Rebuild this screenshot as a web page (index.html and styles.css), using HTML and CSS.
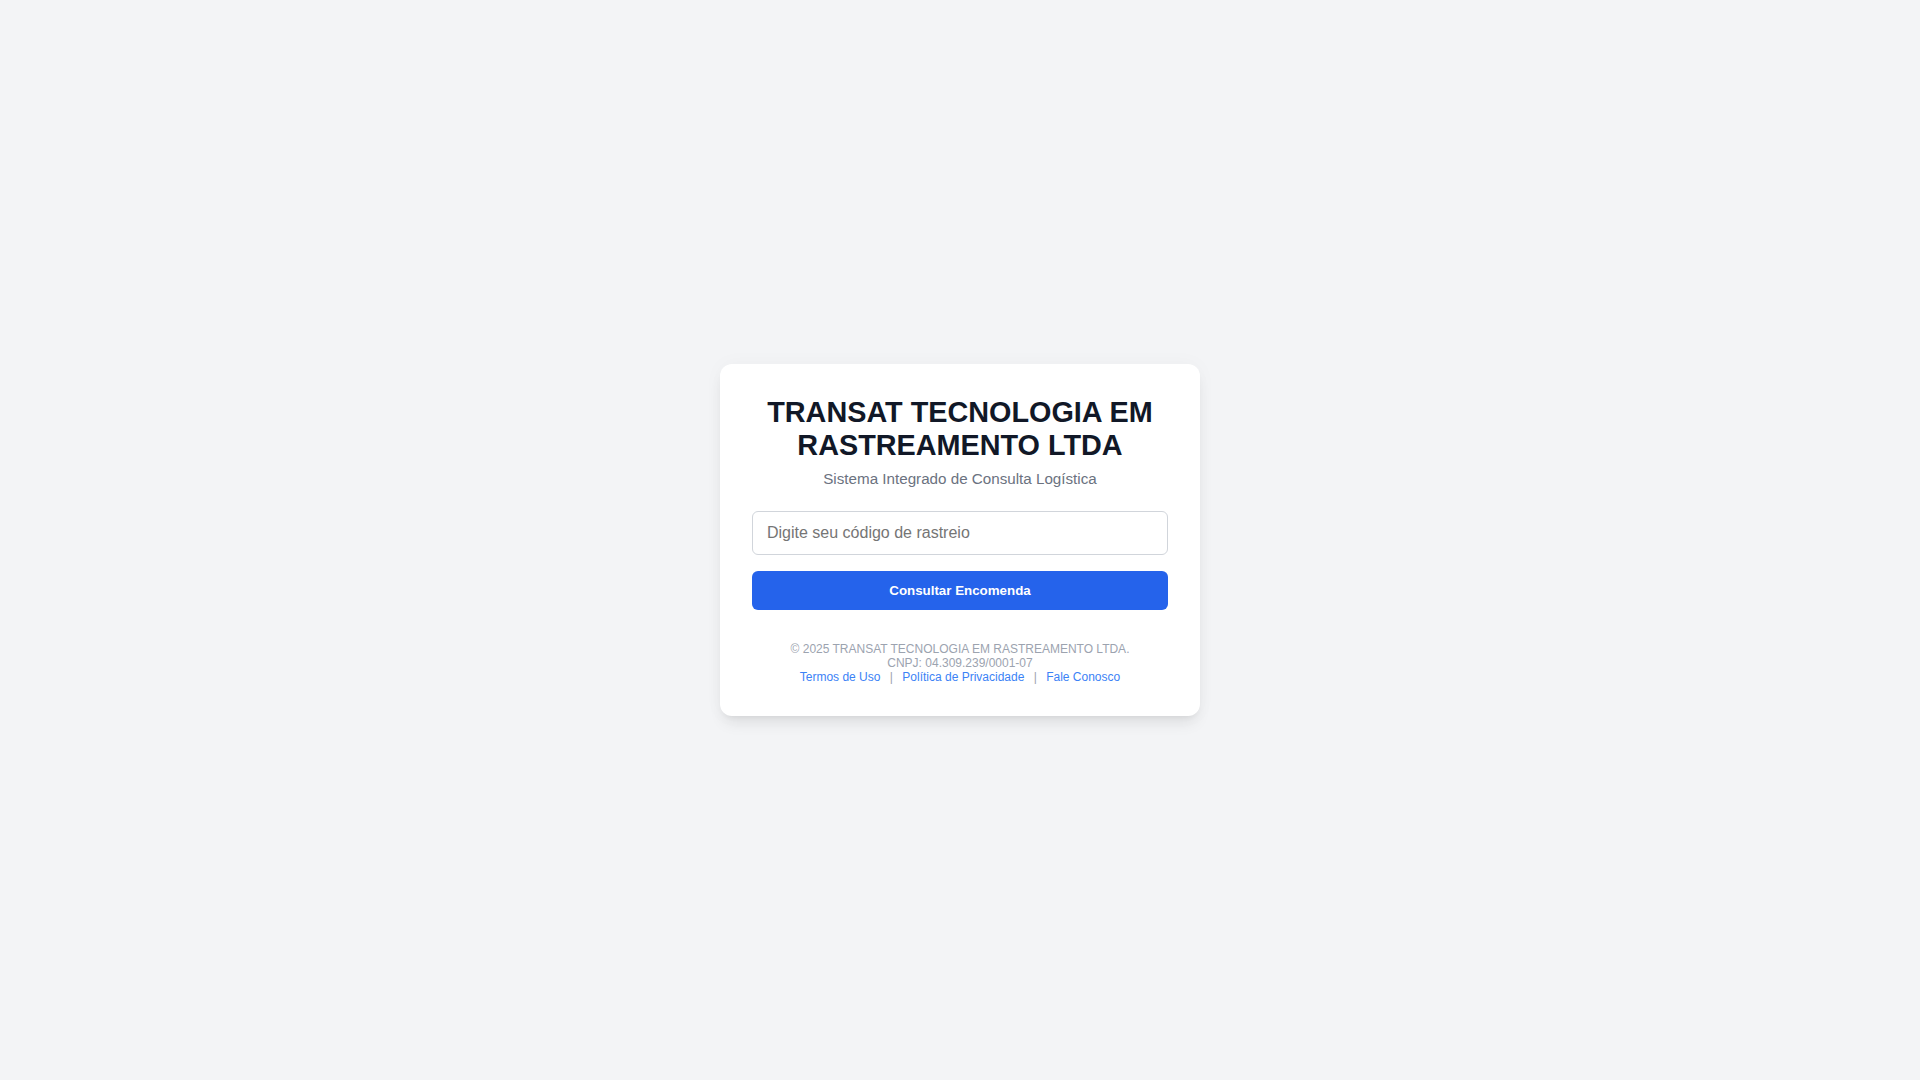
FILE: index.html
```html
<!DOCTYPE html>
<html lang="pt-BR">
<head>
<meta charset="utf-8">
<title>TRANSAT TECNOLOGIA EM RASTREAMENTO LTDA</title>
<link rel="stylesheet" href="styles.css">
</head>
<body>
<main class="page">
  <section class="card">
    <header class="header">
      <h1 class="title">TRANSAT TECNOLOGIA EM RASTREAMENTO LTDA</h1>
      <p class="subtitle">Sistema Integrado de Consulta Logística</p>
    </header>
    <form class="form" onsubmit="return false;">
      <input class="input" type="text" placeholder="Digite seu código de rastreio">
      <button class="button" type="submit">Consultar Encomenda</button>
    </form>
    <footer class="footer">
      <div>© 2025 TRANSAT TECNOLOGIA EM RASTREAMENTO LTDA.</div>
      <div>CNPJ: 04.309.239/0001-07</div>
      <div class="links">
        <a href="#" class="link">Termos de Uso</a> <span class="sep">|</span> <a href="#" class="link">Política de Privacidade</a> <span class="sep">|</span> <a href="#" class="link">Fale Conosco</a>
      </div>
    </footer>
  </section>
</main>
</body>
</html>
```
FILE: styles.css
```css
* { box-sizing: border-box; }
html, body { margin: 0; padding: 0; }
body {
  background: #f3f4f6;
  font-family: "Liberation Sans", Arial, Helvetica, sans-serif;
  color: #111827;
}
.page {
  min-height: 100vh;
  display: flex;
  align-items: center;
  justify-content: center;
}
.card {
  width: 480px;
  background: #ffffff;
  border-radius: 12px;
  padding: 32px;
  box-shadow: 0 10px 15px -3px rgba(0,0,0,0.08), 0 4px 6px -4px rgba(0,0,0,0.08), 0 0 20px rgba(0,0,0,0.03);
}
.header {
  text-align: center;
  margin-bottom: 23px;
}
.title {
  margin: 0;
  font-size: 28.8px;
  line-height: 33.1px;
  font-weight: 700;
  color: #111827;
}
.subtitle {
  margin: 8px 0 0;
  font-size: 15.2px;
  line-height: 17.5px;
  color: #6b7280;
}
.form {
  display: flex;
  flex-direction: column;
  gap: 16px;
}
.input {
  width: 100%;
  height: 44px;
  padding: 0 14px;
  border: 1px solid #d1d5db;
  border-radius: 6px;
  font-family: "Liberation Sans", Arial, sans-serif;
  font-size: 16px;
  color: #111827;
  background: #fff;
  outline: none;
}
.input::placeholder { color: #757575; }
.button {
  width: 100%;
  height: 39px;
  border: 0;
  border-radius: 6px;
  background: #2563eb;
  color: #ffffff;
  font-family: "Liberation Sans", Arial, sans-serif;
  font-size: 13.333px;
  font-weight: 700;
  cursor: pointer;
}
.footer {
  margin-top: 32px;
  text-align: center;
  font-size: 12px;
  line-height: 14px;
  color: #9ca3af;
}
.link {
  color: #3b82f6;
  text-decoration: none;
}
.sep {
  margin: 0 6px;
  color: #9ca3af;
}
```
